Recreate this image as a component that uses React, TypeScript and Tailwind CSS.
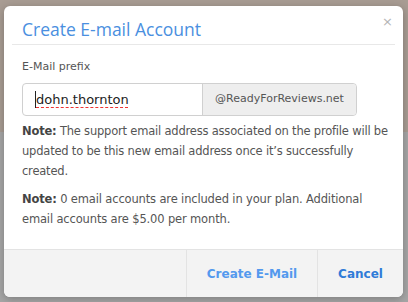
import React from "react";

export default function App() {
  return (
    <div
      className="h-[302px] w-[408px] overflow-hidden pt-[6px] pl-[4px] pr-[5px] bg-[linear-gradient(#a89c93_0_132px,#a6a6a6_132px)]"
      style={{ fontFamily: '"DejaVu Sans", Verdana, sans-serif' }}
    >
      <div className="relative flex h-[291px] flex-col overflow-hidden rounded-[6px] bg-white shadow-[0_2px_8px_rgba(0,0,0,0.25)]">
        <button className="absolute right-[10px] top-[9px] text-[13px] leading-none text-[#b5b5b5]">
          ×
        </button>
        <div className="mx-[8px] flex h-[39px] items-center border-b border-[#e8e8e8] px-[10px] pt-[8px]">
          <h1
            className="text-[17.5px] font-normal leading-[20px] text-[#4a8fe0]"
            style={{ fontFamily: '"Open Sans", "Noto Sans", sans-serif' }}
          >
            Create E-mail Account
          </h1>
        </div>
        <div className="flex-1 pl-[18px] pr-[6px] pt-[14px] text-[11.5px] text-[#555]">
          <div className="text-[11px] leading-[15px]">E-Mail prefix</div>
          <div className="mt-[9px] flex h-[33px] w-[335px] rounded-[4px] border border-[#d0d0d0]">
            <div className="flex w-[180px] items-center border-r border-[#d0d0d0] pl-[12px] text-[13px] text-[#222]">
              <span className="h-[17px] w-px bg-[#222]" />
              <span className="underline decoration-[#e33] decoration-dashed decoration-1 underline-offset-[3px]">
                dohn.thornton
              </span>
            </div>
            <div className="flex flex-1 items-center justify-center rounded-r-[4px] bg-[#eeeeee] text-[11px] text-[#555]">
              @ReadyForReviews.net
            </div>
          </div>
          <p className="mt-[5px] leading-[20px] tracking-[-0.2px]">
            <b className="text-[#444]">Note:</b> The support email address associated on the profile will be updated to be this new email address once it’s successfully created.
          </p>
          <p className="mt-[8px] pr-[14px] leading-[20px] tracking-[-0.15px]">
            <b className="text-[#444]">Note:</b> 0 email accounts are included in your plan. Additional email accounts are $5.00 per month.
          </p>
        </div>
        <div className="flex h-[48px] border-t border-[#e3e3e3] bg-[#f3f3f3] text-[12px] font-bold">
          <div className="w-[182px]" />
          <button className="w-[131px] border-l border-[#e3e3e3] text-[#5499ee]">Create E-Mail</button>
          <button className="flex-1 border-l border-[#e3e3e3] text-[#2f7bd8]">Cancel</button>
        </div>
      </div>
    </div>
  );
}
